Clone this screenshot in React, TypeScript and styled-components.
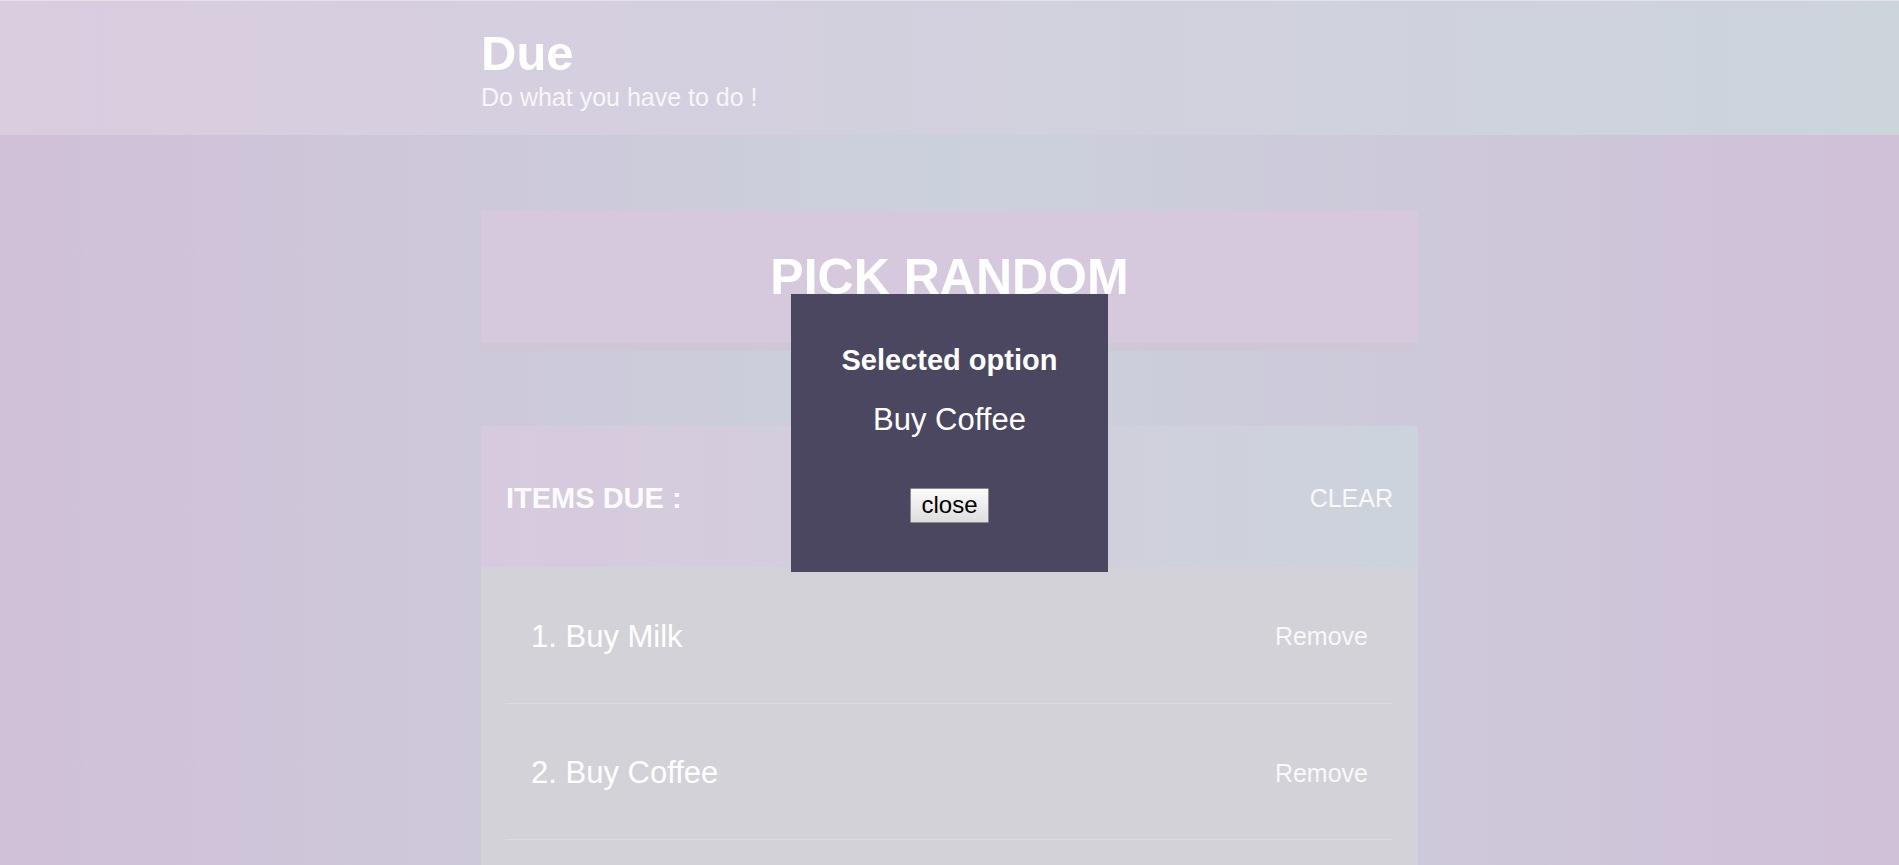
import React from "react";
import styled, { createGlobalStyle } from "styled-components";

const GlobalStyle = createGlobalStyle`
  html, body {
    margin: 0;
    padding: 0;
    height: 100%;
    overflow: hidden;
  }
  body {
    font-family: "Liberation Sans", Arial, sans-serif;
    background: linear-gradient(to right, #d0c0d8 0%, #cbd1dc 50%, #d0c0d8 100%);
    color: #ffffff;
  }
  * { box-sizing: border-box; }
`;

const Page = styled.div`
  min-height: 100vh;
`;

const Header = styled.header`
  border-top: 1px solid #e3e1e7;
  padding: 24px 0 24px;
  background: linear-gradient(to right, #d9cde0, #ccd4dc);
`;

const Container = styled.div`
  width: 937px;
  margin: 0 auto;
`;

const Title = styled.h1`
  margin: 0;
  font-size: 49px;
  line-height: 56px;
  font-weight: 700;
  color: #ffffff;
`;

const Subtitle = styled.h2`
  margin: 2px 0 0;
  font-size: 25px;
  line-height: 28px;
  font-weight: 400;
  color: #f8f6f9;
`;

const Main = styled(Container)`
  padding-top: 76px;
`;

const BigButton = styled.button`
  display: flex;
  align-items: center;
  justify-content: center;
  width: 100%;
  height: 140px;
  margin: 0 0 75px;
  padding: 0;
  border: none;
  border-bottom: 8px solid #cfc7d6;
  background: #d6c9de;
  color: #ffffff;
  font-family: "Liberation Sans", Arial, sans-serif;
  font-size: 50px;
  font-weight: 700;
  cursor: pointer;
`;

const OptionsHeader = styled.div`
  display: flex;
  align-items: center;
  justify-content: space-between;
  height: 141px;
  padding: 4px 25px 0;
  background: linear-gradient(to right, #d7cade, #ccd3dc);
`;

const OptionsTitle = styled.h3`
  margin: 0;
  font-size: 29px;
  font-weight: 700;
  color: #fbfafc;
`;

const LinkButton = styled.button<{ $size: number }>`
  background: none;
  border: none;
  padding: 0;
  font-family: "Liberation Sans", Arial, sans-serif;
  font-size: ${(p) => p.$size}px;
  color: #f9f8fa;
  cursor: pointer;
`;

const OptionList = styled.div`
  background: #d3d2d8;
  padding: 0 25px 200px;
`;

const OptionRow = styled.div`
  display: flex;
  align-items: center;
  justify-content: space-between;
  height: 136.5px;
  padding: 4px 25px 0;
  border-bottom: 1px solid #dcdbe0;
`;

const OptionText = styled.p`
  margin: 0;
  font-size: 31px;
  color: #ffffff;
`;

const Overlay = styled.div`
  position: fixed;
  inset: 0;
  display: flex;
  align-items: center;
  justify-content: center;
`;

const Modal = styled.div`
  width: 317px;
  height: 278px;
  padding-top: 50px;
  background: #4b4760;
  text-align: center;
  color: #ffffff;
  display: flex;
  flex-direction: column;
  align-items: center;
`;

const ModalTitle = styled.h3`
  margin: 0;
  font-size: 29px;
  line-height: 33px;
  font-weight: 700;
`;

const ModalBody = styled.p`
  margin: 25px 0 0;
  font-size: 31px;
  line-height: 36px;
`;

const CloseButton = styled.button`
  margin-top: 50px;
  height: 35px;
  width: 79px;
  padding: 0;
  font-family: "Liberation Sans", Arial, sans-serif;
  font-size: 24px;
  color: #000000;
  border: 1px solid #8a8a8a;
  border-radius: 1px;
  background: linear-gradient(#fbfbfb, #dedede);
  cursor: pointer;
`;

const options = ["Buy Milk", "Buy Coffee"];

export default function App() {
  return (
    <>
      <GlobalStyle />
      <Page>
        <Header>
          <Container>
            <Title>Due</Title>
            <Subtitle>Do what you have to do !</Subtitle>
          </Container>
        </Header>
        <Main>
          <BigButton>PICK RANDOM</BigButton>
          <OptionsHeader>
            <OptionsTitle>ITEMS DUE :</OptionsTitle>
            <LinkButton $size={25}>CLEAR</LinkButton>
          </OptionsHeader>
          <OptionList>
            {options.map((o, i) => (
              <OptionRow key={o}>
                <OptionText>
                  {i + 1}. {o}
                </OptionText>
                <LinkButton $size={25}>Remove</LinkButton>
              </OptionRow>
            ))}
          </OptionList>
        </Main>
      </Page>
      <Overlay>
        <Modal>
          <ModalTitle>Selected option</ModalTitle>
          <ModalBody>Buy Coffee</ModalBody>
          <CloseButton>close</CloseButton>
        </Modal>
      </Overlay>
    </>
  );
}
